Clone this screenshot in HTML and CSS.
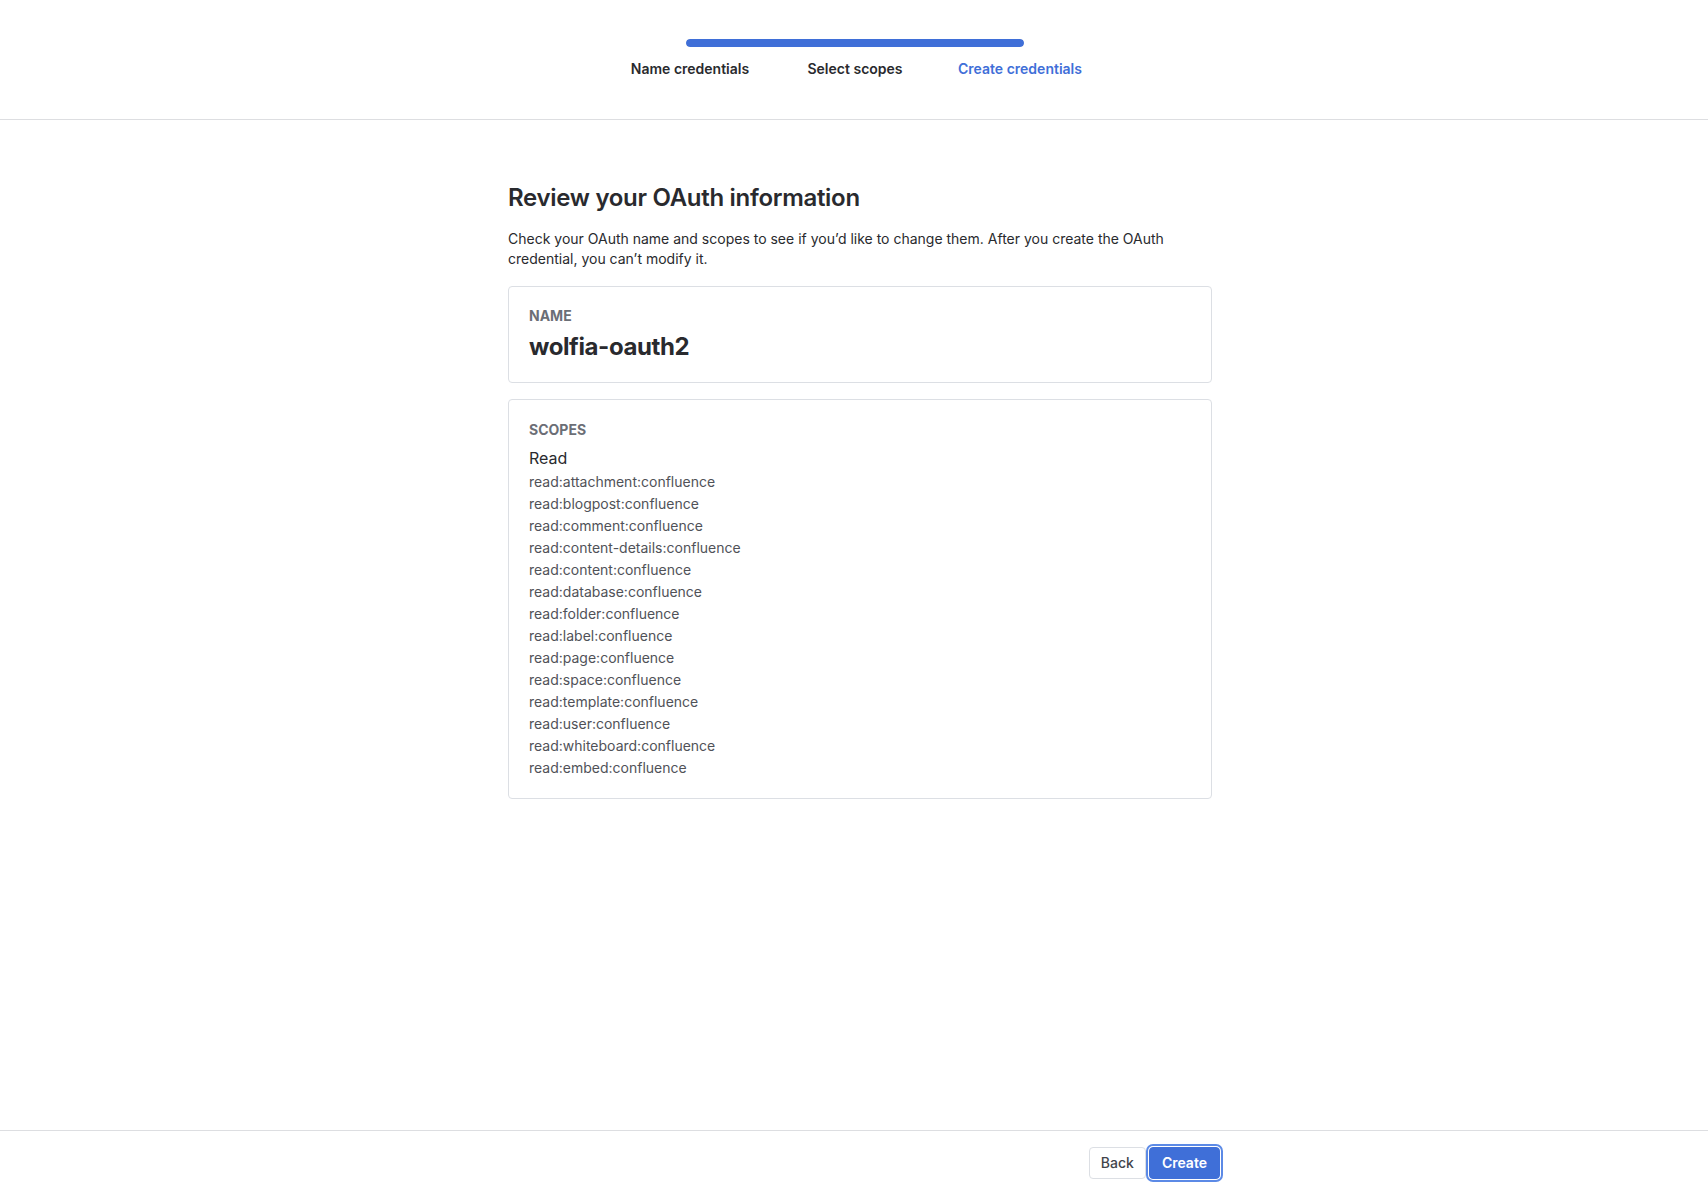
FILE: index.html
```html
<!DOCTYPE html>
<html lang="en">
<head>
<meta charset="utf-8">
<title>Create credentials</title>
<link rel="stylesheet" href="styles.css">
</head>
<body>
<div class="page">
  <header class="header">
    <div class="progress"><div class="progress-fill"></div></div>
    <ol class="steps">
      <li class="step">Name credentials</li>
      <li class="step">Select scopes</li>
      <li class="step step-current">Create credentials</li>
    </ol>
  </header>
  <main class="main">
    <div class="content">
      <h1 class="title">Review your OAuth information</h1>
      <p class="intro">Check your OAuth name and scopes to see if you’d like to change them. After you create the OAuth credential, you can’t modify it.</p>
      <section class="card card-name">
        <div class="card-label">NAME</div>
        <div class="card-value">wolfia-oauth2</div>
      </section>
      <section class="card card-scopes">
        <div class="card-label">SCOPES</div>
        <div class="scope-group">Read</div>
        <ul class="scope-list">
          <li>read:attachment:confluence</li>
          <li>read:blogpost:confluence</li>
          <li>read:comment:confluence</li>
          <li>read:content-details:confluence</li>
          <li>read:content:confluence</li>
          <li>read:database:confluence</li>
          <li>read:folder:confluence</li>
          <li>read:label:confluence</li>
          <li>read:page:confluence</li>
          <li>read:space:confluence</li>
          <li>read:template:confluence</li>
          <li>read:user:confluence</li>
          <li>read:whiteboard:confluence</li>
          <li>read:embed:confluence</li>
        </ul>
      </section>
    </div>
  </main>
  <footer class="footer">
    <div class="footer-inner">
      <button class="btn btn-default" type="button">Back</button>
      <button class="btn btn-primary" type="button">Create</button>
    </div>
  </footer>
</div>
</body>
</html>
```

FILE: styles.css
```css
* { box-sizing: border-box; }

html, body {
  margin: 0;
  padding: 0;
  background: #ffffff;
}

body {
  font-family: Inter, "Noto Sans", "Liberation Sans", sans-serif;
  color: #292a2e;
  font-size: 14px;
  line-height: 20px;
}

.page {
  height: 100vh;
  display: flex;
  flex-direction: column;
}

.header {
  flex: 0 0 120px;
  border-bottom: 1px solid #dddee1;
  padding-top: 39px;
  display: flex;
  flex-direction: column;
  align-items: center;
}

.progress {
  width: 338px;
  height: 8px;
  margin-left: 2px;
  border-radius: 4px;
  background: #dfe1e6;
  overflow: hidden;
}

.progress-fill {
  width: 100%;
  height: 100%;
  background: #3f6fd8;
  border-radius: 4px;
}

.steps {
  list-style: none;
  margin: 12px 0 0 2px;
  padding: 0;
  display: grid;
  grid-template-columns: repeat(3, 165px);
}

.step {
  text-align: center;
  font-weight: 600;
  font-size: 14px;
  line-height: 20px;
  color: #292a2e;
}

.step-current {
  color: #3f6fd8;
}

.main {
  flex: 1 1 auto;
  padding-top: 64px;
}

.content {
  width: 704px;
  margin-left: calc(50% - 346px);
}

.title {
  margin: 0;
  font-size: 24px;
  line-height: 28px;
  font-weight: 600;
  letter-spacing: -0.3px;
  color: #292a2e;
}

.intro {
  margin: 17px 0 0;
  font-size: 14px;
  line-height: 20px;
}

.card {
  border: 1px solid #dcdfe4;
  border-radius: 4px;
  padding: 19px 20px 20px;
}

.card-name {
  margin-top: 17px;
}

.card-scopes {
  margin-top: 16px;
  padding-top: 20px;
}

.card-label {
  font-size: 14px;
  line-height: 20px;
  font-weight: 700;
  color: #6b6e76;
}

.card-value {
  margin-top: 6px;
  font-size: 24px;
  line-height: 30px;
  font-weight: 700;
  letter-spacing: -0.4px;
  color: #292a2e;
}

.scope-group {
  margin-top: 6px;
  font-size: 16px;
  line-height: 24px;
  color: #292a2e;
}

.scope-list {
  list-style: none;
  margin: 2px 0 0;
  padding: 0;
  display: flex;
  flex-direction: column;
  gap: 2px;
}

.scope-list li {
  font-size: 14px;
  line-height: 20px;
  color: #505258;
}

.footer {
  flex: 0 0 55px;
  border-top: 1px solid #dddee1;
  padding-top: 16px;
}

.footer-inner {
  width: 732px;
  margin: 0 auto;
  display: flex;
  justify-content: flex-end;
  gap: 3px;
}

.btn {
  font-family: Inter, "Noto Sans", "Liberation Sans", sans-serif;
  height: 32px;
  padding: 0 12px;
  font-size: 14px;
  line-height: 20px;
  border-radius: 4px;
  cursor: pointer;
}

.btn-default {
  background: #ffffff;
  border: 1px solid #dcdfe4;
  color: #42454b;
  font-weight: 500;
  padding: 0 11px;
}

.btn-primary {
  background: #3f6fd8;
  border: 1px solid #3f6fd8;
  color: #ffffff;
  font-weight: 600;
  box-shadow: 0 0 0 1px #ffffff, 0 0 0 3px #5c8ae6;
}
```
